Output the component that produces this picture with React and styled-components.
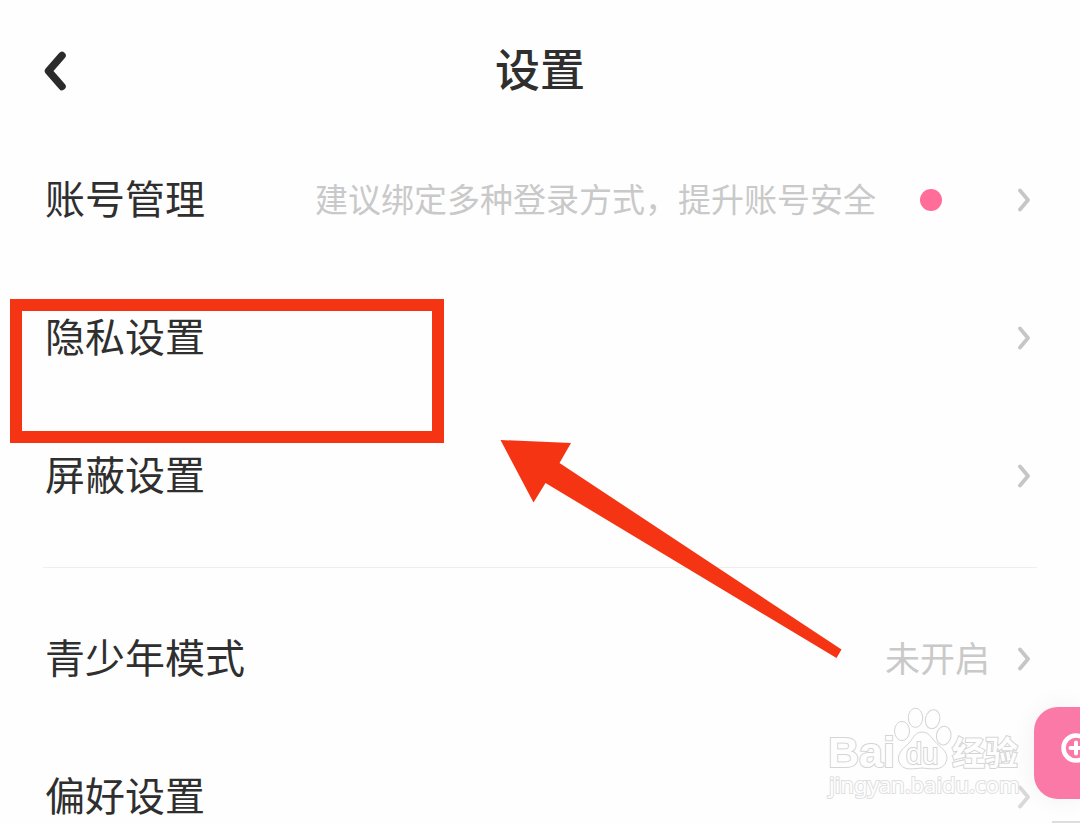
import React from "react";
import styled, { createGlobalStyle } from "styled-components";

const GlobalStyle = createGlobalStyle`
  * {
    box-sizing: border-box;
  }

  body {
    margin: 0;
    background: #fefefe;
    color: #2f2f2f;
    font-family: "Noto Sans CJK SC", sans-serif;
  }

  button {
    border: none;
    padding: 0;
    background: none;
    color: inherit;
    font: inherit;
    cursor: pointer;
  }
`;

const Page = styled.div`
  position: relative;
  height: 100vh;
  overflow: hidden;
`;

const Header = styled.header`
  display: grid;
  grid-template-columns: 1fr auto 1fr;
  align-items: center;
  padding: 36px 44px 25px;
`;

const BackButton = styled.button`
  display: flex;
  justify-self: start;
`;

const Title = styled.h1`
  margin: 0;
  padding-bottom: 6px;
  font-size: 45px;
  font-weight: 500;
  line-height: 64px;
`;

const List = styled.ul`
  margin: 0;
  padding: 0;
  list-style: none;
`;

const Item = styled.li`
  position: relative;
`;

const Row = styled.button`
  display: flex;
  align-items: center;
  gap: 28px;
  width: 100%;
  height: 138px;
  padding: 0 50px 0 45px;
  text-align: left;
`;

const Label = styled.span`
  flex: 1;
  padding-bottom: 6px;
  font-size: 40px;
  line-height: 60px;
`;

const Value = styled.span`
  padding-bottom: 4px;
  color: #c9c9c9;
  font-size: ${(props) => (props.$hint ? "33px" : "35px")};
  line-height: 60px;
`;

const Dot = styled.span`
  width: 22px;
  height: 22px;
  margin: 0 48px 0 16px;
  border-radius: 50%;
  background: #ff6d98;
`;

const Divider = styled.hr`
  height: 1px;
  margin: 22px 43px;
  border: none;
  background: #eeeeee;
`;

const Highlight = styled.div`
  position: absolute;
  top: 30px;
  left: 10px;
  width: 434px;
  height: 144px;
  border: 12px solid #f43412;
  pointer-events: none;
`;

const Pointer = styled.svg`
  position: absolute;
  z-index: 1;
  top: 170px;
  left: 500px;
  pointer-events: none;
`;

const Watermark = styled.svg`
  position: absolute;
  right: 0;
  bottom: 0;
  pointer-events: none;
  fill: #fefefe;
  stroke: #d4d4d4;
  stroke-width: 1;

  text {
    paint-order: stroke;
    stroke-width: 2;
  }
`;

const SideDock = styled.aside`
  position: absolute;
  right: 0;
  bottom: 0;
  display: flex;
  flex-direction: column;
  align-items: flex-end;
  gap: 22px;
`;

const AddButton = styled.button`
  display: flex;
  align-items: center;
  justify-content: flex-end;
  width: 46px;
  height: 92px;
  padding-bottom: 10px;
  border-radius: 24px 0 0 24px;
  background: #fb79a6;
  box-shadow: 0 0 26px rgba(0, 0, 0, 0.06);
`;

const DockEdge = styled.div`
  width: 28px;
  height: 2px;
  background: #dedede;
`;

const Chevron = ({ faded }) => (
  <svg width="12" height="24" viewBox="0 0 12 24" fill="none" aria-hidden="true">
    <path
      d="M2 2.500 L10 12 L2 21.500"
      stroke={faded ? "#d9d9d9" : "#c6c6c6"}
      strokeWidth="3.800"
      strokeLinecap="round"
      strokeLinejoin="round"
    />
  </svg>
);

const SettingItem = ({ label, value, hint, dot, faded, children }) => (
  <Item>
    <Row type="button">
      <Label>{label}</Label>
      {value && <Value $hint={hint}>{value}</Value>}
      {dot && <Dot />}
      <Chevron faded={faded} />
    </Row>
    {children}
  </Item>
);

const BaiduMark = () => (
  <Watermark width="270" height="133" viewBox="0 0 270 133" aria-hidden="true">
    <text x="18" y="77" fontFamily="Liberation Sans, sans-serif" fontWeight="700" fontSize="43">
      Bai
    </text>
    <ellipse cx="92" cy="41" rx="7.5" ry="9.6" />
    <ellipse cx="105.5" cy="27.8" rx="7.2" ry="9.6" />
    <ellipse cx="122.6" cy="29.2" rx="7.2" ry="9.6" transform="rotate(12 122.6 29.2)" />
    <ellipse cx="133.7" cy="45.6" rx="7.3" ry="9.4" transform="rotate(8 133.7 45.6)" />
    <path d="M112 42C120 42 122 50 129 55.500C136 61 138 66 136.500 71C133 81 123 79 112 78C101 79 93 81 89 72C87 65 91 60 97 55C103 50 104 42 112 42Z" />
    <text x="96" y="74" fontFamily="Liberation Sans, sans-serif" fontSize="29">
      du
    </text>
    <text x="142" y="75" fontFamily="Noto Sans CJK SC, sans-serif" fontWeight="700" fontSize="33">
      经验
    </text>
    <text x="19" y="103" fontFamily="Noto Sans, sans-serif" fontSize="22" stroke="#e0e0e0">
      jingyan.baidu.com
    </text>
  </Watermark>
);

const App = () => {
  return (
    <Page>
      <GlobalStyle />
      <Header>
        <BackButton type="button" aria-label="返回">
          <svg width="24" height="40" viewBox="0 0 24 40" fill="none">
            <path
              d="M18 4.500 L4.500 20 L18 35.500"
              stroke="#2b2b2b"
              strokeWidth="7.500"
              strokeLinecap="round"
              strokeLinejoin="round"
            />
          </svg>
        </BackButton>
        <Title>设置</Title>
      </Header>
      <main>
        <List>
          <SettingItem label="账号管理" value="建议绑定多种登录方式，提升账号安全" hint dot />
          <SettingItem label="隐私设置">
            <Highlight />
            <Pointer width="342" height="222" viewBox="0 0 342 222" aria-hidden="true">
              <path
                d="M0.500 1 L71 4 L59.500 24 L341.500 210.500 L336.500 219 L45.500 44 L33.500 63.500 Z"
                fill="#f43412"
              />
            </Pointer>
          </SettingItem>
          <SettingItem label="屏蔽设置" />
        </List>
        <Divider />
        <List>
          <SettingItem label="青少年模式" value="未开启" />
          <SettingItem label="偏好设置" faded />
        </List>
      </main>
      <BaiduMark />
      <SideDock>
        <AddButton type="button" aria-label="添加">
          <svg width="20" height="32" viewBox="0 0 20 32" fill="none" stroke="#ffffff">
            <circle cx="16" cy="16" r="12.500" strokeWidth="4.500" />
            <path d="M16 10.500V21.500M10.500 16H21.500" strokeWidth="4" strokeLinecap="round" />
          </svg>
        </AddButton>
        <DockEdge />
      </SideDock>
    </Page>
  );
};

export default App;
